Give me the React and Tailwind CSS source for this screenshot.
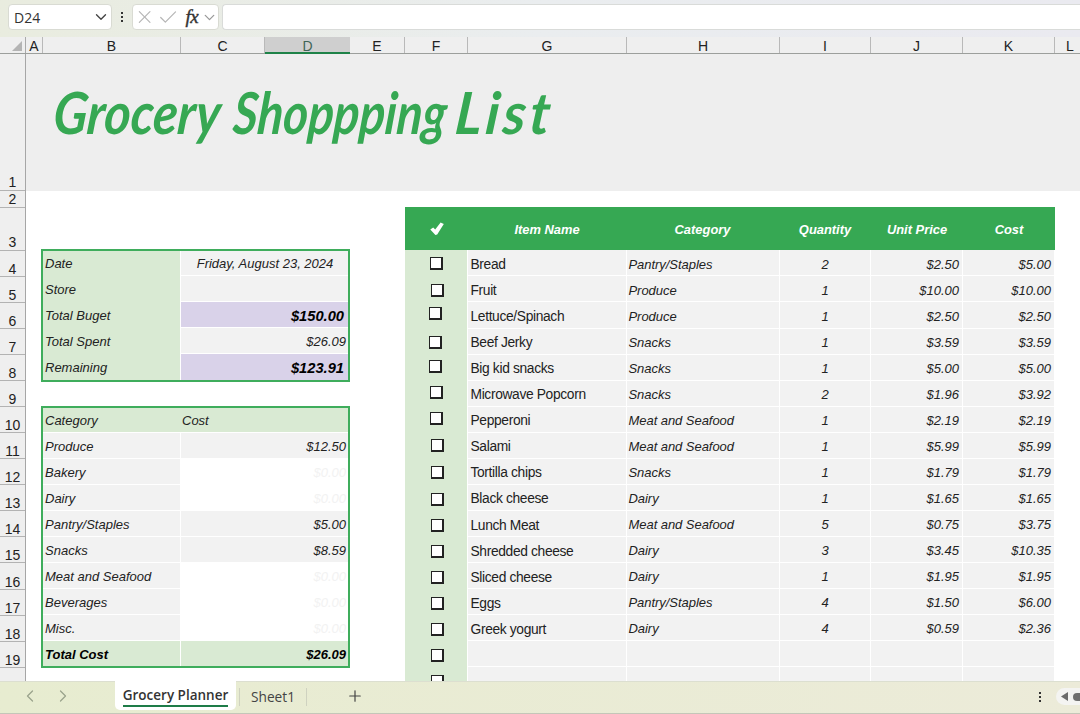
import { useState } from "react";
import { ChevronDown, ChevronLeft, ChevronRight, Check, Plus, X } from "lucide-react";

const columns = [
  { name: "A", width: "w-[17px]" },
  { name: "B", width: "w-[138px]" },
  { name: "C", width: "w-[84px]" },
  { name: "D", width: "w-[85px]", active: true },
  { name: "E", width: "w-[55px]" },
  { name: "F", width: "w-[63px]" },
  { name: "G", width: "w-[159px]" },
  { name: "H", width: "w-[153px]" },
  { name: "I", width: "w-[91px]" },
  { name: "J", width: "w-[92px]" },
  { name: "K", width: "w-[92px]" },
  { name: "L", width: "w-[31px]" },
];

const rowNumbers = [4, 5, 6, 7, 8, 9, 10, 11, 12, 13, 14, 15, 16, 17, 18, 19];

const summary = [
  { label: "Date", value: "Friday, August 23, 2024", style: "bg-[#f2f2f2] justify-center" },
  { label: "Store", value: "", style: "bg-[#f2f2f2]" },
  { label: "Total Buget", value: "$150.00", style: "bg-[#d9d2e9] justify-end pr-[5px] text-[14.7px] font-bold text-black" },
  { label: "Total Spent", value: "$26.09", style: "bg-[#f2f2f2] justify-end pr-[3px]" },
  { label: "Remaining", value: "$123.91", style: "bg-[#d9d2e9] justify-end pr-[5px] text-[14.7px] font-bold text-black" },
];

const categories = [
  { name: "Produce", cost: "$12.50" },
  { name: "Bakery", cost: "$0.00" },
  { name: "Dairy", cost: "$0.00" },
  { name: "Pantry/Staples", cost: "$5.00" },
  { name: "Snacks", cost: "$8.59" },
  { name: "Meat and Seafood", cost: "$0.00" },
  { name: "Beverages", cost: "$0.00" },
  { name: "Misc.", cost: "$0.00" },
];

// "box" nudges each checkbox, they are floating form controls
const items = [
  { name: "Bread", category: "Pantry/Staples", qty: "2", price: "$2.50", cost: "$5.00", box: "mt-[6.5px] ml-[25px]" },
  { name: "Fruit", category: "Produce", qty: "1", price: "$10.00", cost: "$10.00", box: "mt-[7.5px] ml-[26px]" },
  { name: "Lettuce/Spinach", category: "Produce", qty: "1", price: "$2.50", cost: "$2.50", box: "mt-[5px] ml-[24px]" },
  { name: "Beef Jerky", category: "Snacks", qty: "1", price: "$3.59", cost: "$3.59", box: "mt-[7.5px] ml-[24px]" },
  { name: "Big kid snacks", category: "Snacks", qty: "1", price: "$5.00", cost: "$5.00", box: "mt-[5px] ml-[24px]" },
  { name: "Microwave Popcorn", category: "Snacks", qty: "2", price: "$1.96", cost: "$3.92", box: "mt-[5px] ml-[25px]" },
  { name: "Pepperoni", category: "Meat and Seafood", qty: "1", price: "$2.19", cost: "$2.19", box: "mt-[5px] ml-[25px]" },
  { name: "Salami", category: "Meat and Seafood", qty: "1", price: "$5.99", cost: "$5.99", box: "mt-[6px] ml-[26px]" },
  { name: "Tortilla chips", category: "Snacks", qty: "1", price: "$1.79", cost: "$1.79", box: "mt-[7.7px] ml-[26px]" },
  { name: "Black cheese", category: "Dairy", qty: "1", price: "$1.65", cost: "$1.65", box: "mt-[7.7px] ml-[26px]" },
  { name: "Lunch Meat", category: "Meat and Seafood", qty: "5", price: "$0.75", cost: "$3.75", box: "mt-[7.7px] ml-[26px]" },
  { name: "Shredded cheese", category: "Dairy", qty: "3", price: "$3.45", cost: "$10.35", box: "mt-[7.7px] ml-[26px]" },
  { name: "Sliced cheese", category: "Dairy", qty: "1", price: "$1.95", cost: "$1.95", box: "mt-[7.7px] ml-[26px]" },
  { name: "Eggs", category: "Pantry/Staples", qty: "4", price: "$1.50", cost: "$6.00", box: "mt-[7.7px] ml-[26px]" },
  { name: "Greek yogurt", category: "Dairy", qty: "4", price: "$0.59", cost: "$2.36", box: "mt-[7.7px] ml-[26px]" },
  { name: "", category: "", qty: "", price: "", cost: "", box: "mt-[7.7px] ml-[26px]" },
  { name: "", category: "", qty: "", price: "", cost: "", box: "mt-[7.7px] ml-[26px]" },
];

function Dots() {
  return (
    <div className="flex flex-col gap-[2px]">
      <span className="size-[2px] bg-[#333]" />
      <span className="size-[2px] bg-[#333]" />
      <span className="size-[2px] bg-[#333]" />
    </div>
  );
}

function FormulaBar() {
  return (
    <div className="flex h-[37px] shrink-0 bg-linear-to-r from-[#e9ecdf] via-[#eaedef] to-[#eaeaf0] pt-[4px] pl-[8px] font-['Open_Sans',sans-serif]">
      <div className="flex h-[26px] w-[104px] items-center justify-between rounded-[4px] border border-[#d9dbd3] bg-white pr-px pl-[5px] text-[14px] text-[#333]">
        <span>D24</span>
        <ChevronDown size={18} strokeWidth={1.8} className="text-[#444]" />
      </div>
      <div className="flex h-[26px] w-[20px] items-center justify-center pb-px">
        <Dots />
      </div>
      <div className="flex h-[26px] w-[87px] items-center rounded-[4px] border border-[#d9dbd3] bg-white pl-px text-[#b5b5b5]">
        <X size={22} strokeWidth={1.3} />
        <Check size={23} strokeWidth={1.3} className="ml-[2px]" />
        <span className="ml-[6px] w-[16px] font-['Liberation_Serif',serif] text-[19px] leading-5 tracking-[-0.5px] text-[#333] italic [-webkit-text-stroke:0.4px_#333]">
          fx
        </span>
        <ChevronDown size={17} strokeWidth={1.8} className="shrink-0 text-[#999]" />
      </div>
      <div className="ml-[3px] h-[26px] flex-1 rounded-l-[4px] border border-r-0 border-[#d9dbd9] bg-white" />
    </div>
  );
}

function ColumnHeaders() {
  return (
    <div className="flex h-[17px] shrink-0 border-b border-[#9c9f9c] bg-[#efefef] text-[14px] leading-[18px] text-[#222]">
      <div className="flex w-[26px] shrink-0 items-end justify-end border-r border-[#aaa] pr-[3px] pb-[2px]">
        <svg width="10" height="10" viewBox="0 0 10 10">
          <path d="M10 0V10H0Z" fill="#b4b4b4" />
        </svg>
      </div>
      {columns.map((col) => (
        <div
          key={col.name}
          className={
            col.active
              ? `${col.width} h-[17px] shrink-0 border-b-2 border-[#1e8248] bg-[#cfcfcf] text-center text-[#3f6557]`
              : `${col.width} shrink-0 border-r border-[#b9b9b9] text-center`
          }
        >
          {col.name}
        </div>
      ))}
    </div>
  );
}

function RowHeaders() {
  const base = "flex shrink-0 items-end justify-center border-b border-[#b3b3b3]";
  return (
    <div className="flex w-[26px] shrink-0 flex-col border-r border-[#a6a6a6] bg-[#efefef] text-[14px] leading-[15px] text-[#222]">
      <div className={`${base} h-[137px]`}>1</div>
      <div className={`${base} h-[17px]`}>2</div>
      <div className={`${base} h-[42.9px]`}>3</div>
      {rowNumbers.map((n) => (
        <div key={n} className={`${base} h-[26.06px]`}>
          <span className="relative top-px">{n}</span>
        </div>
      ))}
    </div>
  );
}

function SummaryTable() {
  return (
    <div className="w-[307px] bg-white outline-2 -outline-offset-1 outline-[#3fad5c]">
      {summary.map((row) => (
        <div key={row.label} className="flex h-[26.06px]">
          <div className="flex w-[138px] items-center bg-[#d9ead3] pt-px pl-[3px]">{row.label}</div>
          <div className={`flex flex-1 items-center border-b border-l border-white pt-[2px] ${row.style}`}>{row.value}</div>
        </div>
      ))}
    </div>
  );
}

function CategoryTable() {
  return (
    <div className="w-[307px] bg-white outline-2 -outline-offset-1 outline-[#3fad5c]">
      <div className="flex h-[26.06px] items-center border-b border-white bg-[#d9ead3] pt-[3px]">
        <div className="w-[138px] pl-[3px]">Category</div>
        <div className="pl-[2px]">Cost</div>
      </div>
      {categories.map((row) => {
        const empty = row.cost === "$0.00";
        return (
          <div key={row.name} className="flex h-[26.06px]">
            <div className="flex w-[138px] items-center border-b border-white bg-[#f2f2f2] pt-[3px] pl-[3px]">{row.name}</div>
            <div
              className={`flex flex-1 items-center justify-end border-b border-l border-white pt-[3px] pr-[3px] ${
                empty ? "bg-white text-[#f2f2f2]" : "bg-[#f2f2f2]"
              }`}
            >
              {row.cost}
            </div>
          </div>
        );
      })}
      <div className="flex h-[26.06px] bg-[#d9ead3] font-bold text-black">
        <div className="flex w-[138px] items-center pt-px pl-[3px]">Total Cost</div>
        <div className="flex flex-1 items-center justify-end border-l border-white pt-px pr-[3px]">$26.09</div>
      </div>
    </div>
  );
}

function ItemTable() {
  const [checked, setChecked] = useState([]);

  const toggle = (index) => {
    setChecked((prev) => (prev.includes(index) ? prev.filter((i) => i !== index) : [...prev, index]));
  };

  const cell = "flex items-center border-b border-l border-white bg-[#f2f2f2] pt-[3px]";

  return (
    <div className="w-[650px] shrink-0">
      <div className="flex h-[43.4px] items-center bg-[#36a853] text-[12.9px] font-bold text-white">
        <div className="flex w-[63px] justify-center">
          <svg width="14" height="14" viewBox="0 0 14 14">
            <path d="M0.3 7.6L3.2 5.6L5.2 7.6L10.6 0.5L13.8 1.9L7.2 12.6L5.4 13Z" fill="#fff" />
          </svg>
        </div>
        <div className="w-[158px] pt-[2px] text-center">Item Name</div>
        <div className="w-[153px] pt-[2px] text-center">Category</div>
        <div className="w-[92px] pt-[2px] text-center">Quantity</div>
        <div className="w-[92px] pt-[2px] text-center">Unit Price</div>
        <div className="w-[92px] pt-[2px] text-center">Cost</div>
      </div>
      {items.map((item, index) => (
        <div key={index} className="flex h-[26.06px]">
          <div className="w-[62px] shrink-0 bg-[#d9ead3]">
            <button
              onClick={() => toggle(index)}
              className={`flex size-[13px] items-center justify-center border border-r-2 border-b-2 border-[#222] bg-white ${item.box}`}
            >
              {checked.includes(index) && <Check size={10} strokeWidth={4} />}
            </button>
          </div>
          <div className={`${cell} w-[159px] pl-[2.5px] text-[13.8px] tracking-[-0.35px] text-[#222] not-italic`}>
            <span className="relative top-px">{item.name}</span>
          </div>
          <div className={`${cell} w-[153px] pl-[1.5px] tracking-[-0.05px]`}>{item.category}</div>
          <div className={`${cell} w-[91px] justify-center`}>{item.qty}</div>
          <div className={`${cell} w-[92px] justify-end pr-[3px]`}>{item.price}</div>
          <div className={`${cell} w-[92px] justify-end pr-[3px]`}>{item.cost}</div>
        </div>
      ))}
    </div>
  );
}

function SheetTabs() {
  return (
    <div className="flex h-[33px] shrink-0 items-start border-t border-b border-t-[#dcdfd0] border-b-[#c4c6b8] bg-linear-to-r from-[#e7ecd0] to-[#ecebd9] font-['Open_Sans',sans-serif] text-[14px]">
      <div className="flex h-[27px] w-[115px] items-center gap-[13px] pl-[20px] text-[#9aa38c]">
        <ChevronLeft size={20} strokeWidth={1.5} />
        <ChevronRight size={20} strokeWidth={1.5} />
      </div>
      <div className="-mt-px flex h-[29px] w-[121px] justify-center rounded-b-[5px] bg-white">
        <span className="h-[26px] border-b-2 border-[#1e7c48] text-[13.5px] leading-[28px] font-semibold whitespace-nowrap text-[#333]">
          Grocery Planner
        </span>
      </div>
      <div className="mt-[6px] ml-[3px] h-[18px] border-l border-[#cfd2c0]" />
      <div className="w-[66px] text-center text-[13.7px] leading-[30px] text-[#444]">Sheet1</div>
      <div className="mt-[6px] h-[18px] border-l border-[#cfd2c0]" />
      <Plus size={18} strokeWidth={1.6} className="mt-[5px] ml-[39px] text-[#444]" />
      <div className="mt-[10px] ml-auto">
        <Dots />
      </div>
      <div className="mt-[6px] ml-[15px] flex h-[17px] w-[24px] items-center gap-[5px] overflow-hidden rounded-l-full bg-[#f4f4f2] pl-[5px]">
        <svg width="7" height="9" viewBox="0 0 7 9" className="shrink-0">
          <path d="M7 0V9L0 4.5Z" fill="#6b6b6b" />
        </svg>
        <div className="h-[8px] w-[20px] shrink-0 rounded-l-full bg-[#6f6f6f]" />
      </div>
    </div>
  );
}

export default function App() {
  return (
    <div className="flex h-[714px] w-[1080px] flex-col overflow-hidden bg-white font-['Liberation_Sans',Arial,sans-serif]">
      <FormulaBar />
      <ColumnHeaders />
      <div className="flex min-h-0 flex-1 overflow-hidden">
        <RowHeaders />
        <div className="flex-1 text-[13px] text-[#222] italic">
          <div className="h-[136.5px] bg-[#eee] pt-[22px] pl-[28px]">
            <h1 className="flex font-['Lato',cursive] text-[58px] leading-[72px] font-bold whitespace-nowrap text-[#36a853]">
              <span className="w-[180px] origin-left scale-x-[0.87] -skew-x-6">Grocery </span>
              <span className="w-[222px] origin-left scale-x-[0.82] -skew-x-6">Shoppping </span>
              <span className="origin-left scale-x-[0.96] -skew-x-6 tracking-[4px]">List</span>
            </h1>
          </div>
          <div className="flex pt-[16.5px]">
            <div className="flex w-[379px] shrink-0 flex-col gap-[26.06px] pt-[43.3px] pl-[16px]">
              <SummaryTable />
              <CategoryTable />
            </div>
            <ItemTable />
          </div>
        </div>
      </div>
      <SheetTabs />
    </div>
  );
}
